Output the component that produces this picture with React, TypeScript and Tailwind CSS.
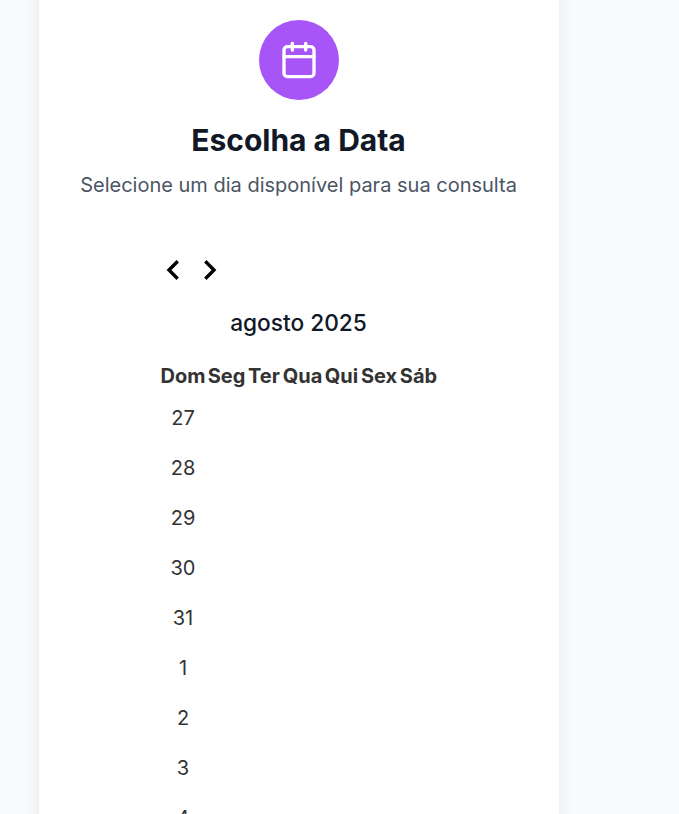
import React from "react";
import { Calendar } from "lucide-react";

const weekdays = [
  { name: "Dom", width: "w-[45px]" },
  { name: "Seg", width: "w-[38px]" },
  { name: "Ter", width: "w-[33px]" },
  { name: "Qua", width: "w-[40px]" },
  { name: "Qui", width: "w-[34px]" },
  { name: "Sex", width: "w-[37px]" },
  { name: "Sáb", width: "w-[38px]" },
];
const days = [27, 28, 29, 30, 31, 1, 2, 3, 4];

function Chevron({ next = false }: { next?: boolean }) {
  return (
    <svg width="20" height="30" viewBox="0 0 20 30" fill="none" stroke="#000" strokeWidth="3.4">
      <path d={next ? "M5.3 6.3l8.7 8.7-8.7 8.7" : "M14.7 6.3L6 15l8.7 8.7"} />
    </svg>
  );
}

export default function App() {
  return (
    <main className="flex h-[814px] items-start overflow-hidden bg-[#f9fafb] pl-[39px] font-['Inter',sans-serif]">
      <section className="-mt-10 flex h-[920px] w-[520px] shrink-0 flex-col items-center bg-white pt-[60px] pr-px shadow-[0_12px_19px_-4px_rgba(0,0,0,0.1),0_5px_7px_-5px_rgba(0,0,0,0.1)]">
        <div className="ml-px flex size-20 items-center justify-center rounded-full bg-[#a855f7] text-white">
          <Calendar size={40} strokeWidth={2} />
        </div>
        <h1 className="mt-5 text-[30px] leading-10 font-bold text-[#111827]">Escolha a Data</h1>
        <p className="mt-[10px] text-[20px] leading-[30px] text-[#4b5563]">Selecione um dia disponível para sua consulta</p>
        <div className="mt-[55px] w-[280px]">
          <nav className="flex gap-[17px] pl-[4.5px]">
            <button aria-label="Anterior"><Chevron /></button>
            <button aria-label="Próximo"><Chevron next /></button>
          </nav>
          <h2 className="mt-[20px] text-center text-[22.7px] leading-[35px] font-medium text-[#111827]">agosto 2025</h2>
          <table className="mt-[20px] w-[281px] table-fixed border-separate border-spacing-x-[2px] border-spacing-y-0 text-[20px] text-[#333]">
            <thead>
              <tr className="h-[33px]">{weekdays.map((day) => <th key={day.name} className={`p-0 align-top leading-[33px] font-bold ${day.width}`}>{day.name}</th>)}</tr>
            </thead>
            <tbody>
              {days.map((day) => <tr key={day} className="h-[50px]"><td className="p-0 text-center">{day}</td></tr>)}
            </tbody>
          </table>
        </div>
      </section>
    </main>
  );
}
